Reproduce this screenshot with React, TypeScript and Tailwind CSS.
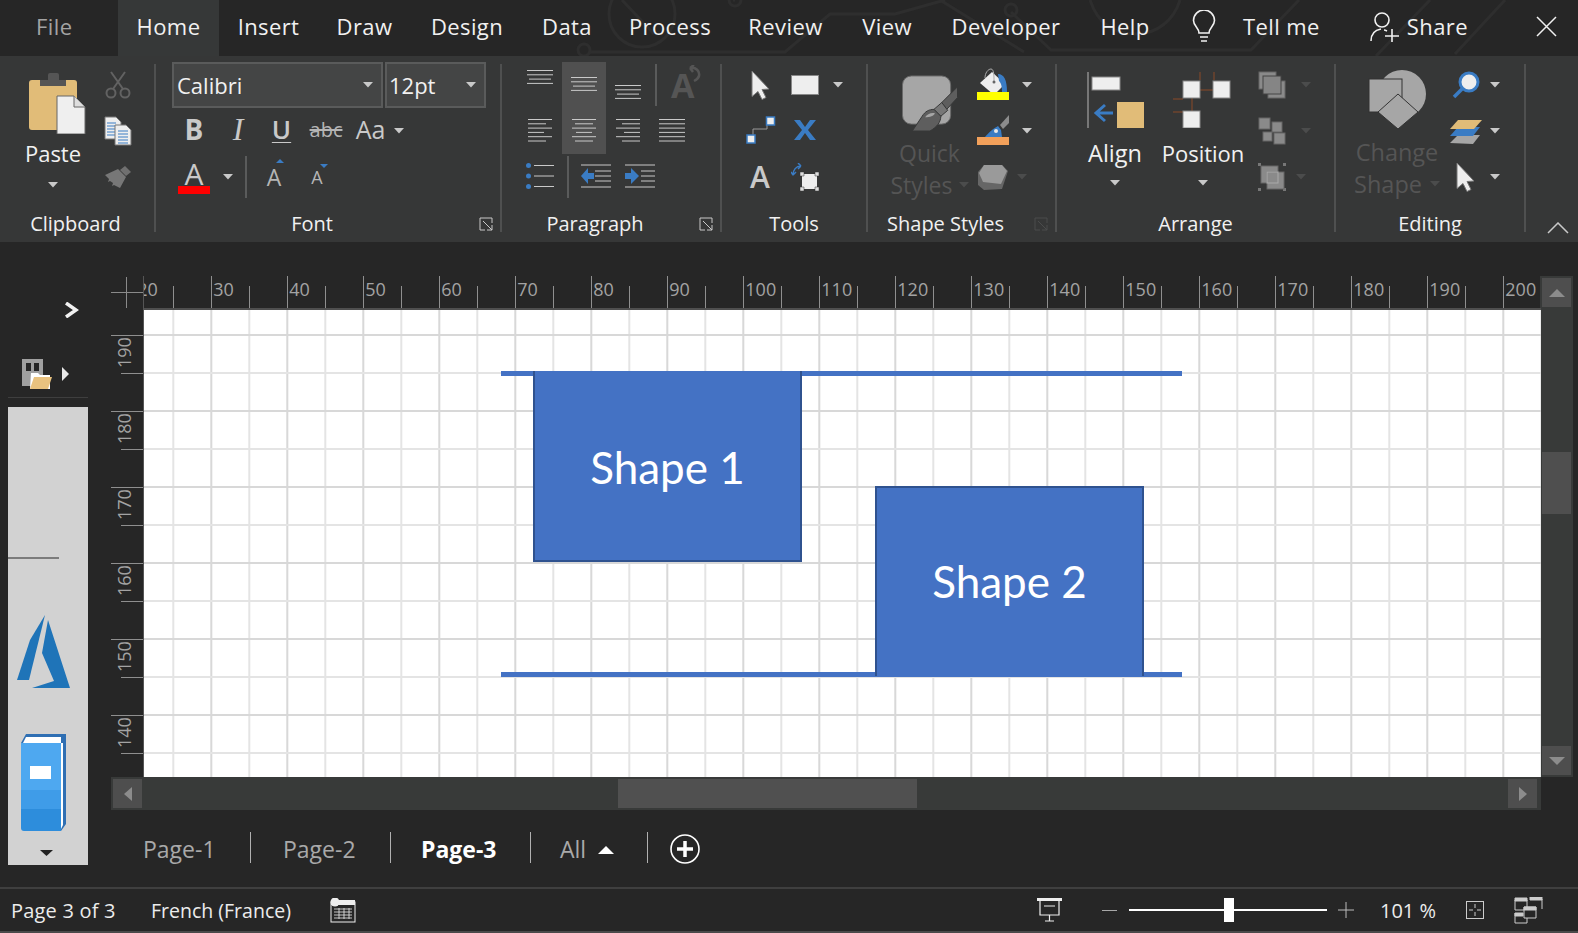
import { ReactNode } from 'react';

const GRID_X = Array.from({ length: 37 }, (_, i) => 29.3 + i * 38);
const GRID_Y = Array.from({ length: 13 }, (_, i) => 25 + i * 38);
const RULER_H = Array.from({ length: 19 }, (_, i) => ({ value: 20 + i * 10, x: i * 76 - 8.7 }));
const RULER_V = [190, 180, 170, 160, 150, 140].map((value, i) => ({ value, y: 25 + i * 76 }));

const Caret = ({ dim, className }: { dim?: boolean; className?: string }) => (
  <svg width="10" height="6" viewBox="0 0 10 6" className={className}>
    <path d="M0 0h10L5 5.5z" fill={dim ? '#4b4c4c' : '#c9c9c9'} />
  </svg>
);

const Launcher = ({ dim }: { dim?: boolean }) => (
  <svg width="14" height="14" viewBox="0 0 14 14" className="absolute right-[7px] top-[11px]">
    <path d="M13 6V1H1v12h5M4 4l9 9M8 13h5V8" fill="none" stroke={dim ? '#4b4c4c' : '#c9c9c9'} strokeWidth="1" />
  </svg>
);

const Sep = () => <div className="mt-[8px] h-[168px] w-[2px] shrink-0 bg-[#4f5050]" />;

const Group = ({
  className,
  labelClass,
  label,
  launcher,
  children,
}: {
  className: string;
  labelClass?: string;
  label: string;
  launcher?: 'on' | 'dim';
  children: ReactNode;
}) => (
  <div className={`flex h-full shrink-0 flex-col pt-[6px] ${className}`}>
    <div className="flex h-[138px]">{children}</div>
    <div className={`relative mt-[6px] flex h-[36px] items-center justify-center text-[20px] text-[#f1f1f1] ${labelClass ?? ''}`}>
      {label}
      {launcher && <Launcher dim={launcher === 'dim'} />}
    </div>
  </div>
);

const Row = ({ children }: { children: ReactNode }) => <div className="flex h-[46px] items-center">{children}</div>;

const Lines = ({ widths, x, top = 0, gap = 6 }: { widths: number[]; x: number[]; top?: number; gap?: number }) => (
  <svg width="30" height="26" viewBox="0 0 30 26">
    {widths.map((w, i) => (
      <path key={i} d={`M${x[i]} ${top + i * gap + 0.5}h${w}`} stroke="#c9c9c9" strokeWidth="1" />
    ))}
  </svg>
);

const Pointer = () => (
  <svg width="20" height="30" viewBox="0 0 20 30">
    <path d="M1 1l17 18-7 .5 4 8-4 2-4-8-6 5z" fill="#eee" stroke="#777" strokeWidth="1" />
  </svg>
);

const Squares = ({ kind }: { kind: 'front' | 'group' | 'select' }) => (
  <svg width="28" height="28" viewBox="0 0 28 28">
    {kind === 'front' && (
      <>
        <rect x="1" y="1" width="17" height="17" fill="#8a8a8a" stroke="#666" />
        <rect x="10" y="10" width="17" height="17" fill="#8a8a8a" stroke="#666" />
        <rect x="5" y="5" width="18" height="18" fill="#858585" stroke="#444" />
      </>
    )}
    {kind === 'group' && (
      <>
        <rect x="1" y="1" width="11" height="11" fill="#8a8a8a" stroke="#666" />
        <rect x="14" y="5" width="10" height="10" fill="#8a8a8a" stroke="#666" />
        <rect x="5" y="15" width="9" height="9" fill="#8a8a8a" stroke="#666" />
        <rect x="16" y="16" width="11" height="11" fill="#8a8a8a" stroke="#666" />
      </>
    )}
    {kind === 'select' && (
      <>
        <path d="M0 0h3v3H0zM25 0h3v3h-3zM0 25h3v3H0zM25 25h3v3h-3z" fill="#777" />
        <rect x="3" y="3" width="17" height="17" fill="#8a8a8a" stroke="#666" />
        <rect x="9" y="9" width="17" height="17" fill="#8a8a8a" stroke="#666" />
        <rect x="9" y="9" width="11" height="11" fill="#8a8a8a" stroke="#aaa" />
      </>
    )}
  </svg>
);

const TitleBar = () => (
  <div className="relative flex h-[56px] shrink-0 bg-[#262626] pb-[3px] text-[22px] tracking-[0.4px] text-[#f1f1f1]">
    <svg width="1578" height="56" viewBox="0 0 1578 56" fill="none" stroke="#2e2e2e" strokeWidth="3" className="absolute inset-0">
      <circle cx="642" cy="14" r="33" />
      <path d="M622 0l32 34M590 52h195l45-38h65l50-14M940 0l84 52M1011 12l40 38h200l48-50M1090 0c8 24 25 34 46 34s38-14 44-34M1430 0l-54 56M1505 0l-50 54M735 0l-2 0" />
      <circle cx="584" cy="50" r="6" />
      <circle cx="1011" cy="10" r="6" />
      <circle cx="735" cy="0" r="6" />
    </svg>
    <div className="relative flex w-[118px] items-center pl-[36px] text-[#a3a3a3]">File</div>
    <div className="relative -mb-[3px] flex w-[101px] items-center justify-center bg-[#363838] pb-[3px]">Home</div>
    <div className="relative flex w-[99px] items-center justify-center">Insert</div>
    <div className="relative flex w-[93px] items-center justify-center">Draw</div>
    <div className="relative flex w-[112px] items-center justify-center">Design</div>
    <div className="relative flex w-[88px] items-center justify-center">Data</div>
    <div className="relative flex w-[118px] items-center justify-center">Process</div>
    <div className="relative flex w-[113px] items-center justify-center">Review</div>
    <div className="relative flex w-[90px] items-center justify-center">View</div>
    <div className="relative flex w-[148px] items-center justify-center">Developer</div>
    <div className="relative flex w-[90px] items-center justify-center">Help</div>
    <div className="relative ml-[22px] flex items-center">
      <svg width="24" height="34" viewBox="0 0 24 34" fill="none" stroke="#f1f1f1" strokeWidth="1.6">
        <path d="M7 23c0-5-5.500-7-5.500-12.500a10.500 10.500 0 0 1 21 0C22.500 16 17 18 17 23zM8 27h8M9 31h6" />
      </svg>
    </div>
    <div className="relative ml-[27px] flex items-center">Tell me</div>
    <div className="relative ml-[50px] flex items-center">
      <svg width="30" height="32" viewBox="0 0 30 32" fill="none" stroke="#f1f1f1" strokeWidth="1.6">
        <circle cx="12" cy="9" r="7" />
        <path d="M1 30c0-7 4-11 10-12M14 19c1 0 2 .5 3 1M22 18v13M15 25h14" />
      </svg>
    </div>
    <div className="relative ml-[7px] flex items-center">Share</div>
    <div className="relative ml-[68px] flex items-center">
      <svg width="21" height="21" viewBox="0 0 21 21">
        <path d="M1 1l19 19M20 1L1 20" stroke="#f1f1f1" strokeWidth="1.5" />
      </svg>
    </div>
  </div>
);

const Clipboard = () => (
  <Group className="w-[154px]" labelClass="pr-[3px]" label="Clipboard">
    <div className="ml-[2px] flex w-[102px] flex-col items-center pt-[10px]">
      <svg width="58" height="62" viewBox="0 0 58 62" className="ml-[8px]">
        <rect x="1" y="8" width="48" height="50" rx="3" fill="#e1bc78" />
        <path d="M12 14V8h8V3q0-2 2-2h7q2 0 2 2v5h7v6z" fill="#555" />
        <path d="M29 24h17l11 11v27H29z" fill="#efefef" stroke="#666" />
        <path d="M46 24v11h11" fill="#ddd" stroke="#666" />
      </svg>
      <div className="mt-[4px] text-[22px] leading-[30px] text-[#f1f1f1]">Paste</div>
      <Caret className="mt-[14px]" />
    </div>
    <div className="flex w-[28px] flex-col items-center">
      <Row>
        <svg width="26" height="28" viewBox="0 0 26 28" fill="none" stroke="#626262" strokeWidth="2">
          <circle cx="6" cy="22" r="4.500" />
          <circle cx="20" cy="22" r="4.500" />
          <path d="M8 18L20 1M18 18L6 1" />
        </svg>
      </Row>
      <Row>
        <svg width="28" height="30" viewBox="0 0 28 30">
          <path d="M1 1h11l5 5v17H1z" fill="#eee" stroke="#777" />
          <path d="M3 7h9M3 10h11M3 13h11M3 16h11M3 19h11" stroke="#3a7cc4" />
          <path d="M11 9h11l5 5v15H11z" fill="#eee" stroke="#777" />
          <path d="M14 15h10M14 18h10M14 21h10M14 24h10M14 27h10" stroke="#3a7cc4" />
        </svg>
      </Row>
      <Row>
        <svg width="26" height="22" viewBox="0 0 26 22">
          <path d="M15 4l5-4 6 6-5 4z" fill="#707070" />
          <path d="M0 9l13-6 8 8-6 11-6-3-2 1 1-3-3-2-2 1 1-3z" fill="#777" />
        </svg>
      </Row>
    </div>
  </Group>
);

const FontGroup = () => (
  <Group className="w-[344px]" labelClass="pr-[32px]" label="Font" launcher="on">
    <div className="flex flex-col pl-[16px]">
      <div className="flex h-[46px] w-[314px] gap-[2px] text-[22px] text-[#f1f1f1]">
        <div className="flex w-[211px] items-center justify-between border-2 border-[#5a5b5b] bg-[#444545] pl-[3px] pr-[8px]">
          Calibri
          <Caret />
        </div>
        <div className="flex w-[101px] items-center justify-between border-2 border-[#5a5b5b] bg-[#444545] pl-[2px] pr-[8px]">
          12pt
          <Caret />
        </div>
      </div>
      <Row>
        <div className="flex w-[44px] justify-center pb-[4px] text-[28px] font-bold text-[#c9c9c9]">B</div>
        <div className="flex w-[44px] justify-center pb-[4px] font-['Liberation_Serif',serif] text-[32px] italic text-[#c9c9c9]">I</div>
        <div className="flex w-[43px] justify-center pb-[3px] text-[26px] font-semibold text-[#c9c9c9] underline decoration-1 underline-offset-[3px]">U</div>
        <div className="flex w-[46px] justify-center pb-[2px] text-[20px] text-[#b5b5b5] line-through">abc</div>
        <div className="flex w-[43px] justify-center pb-[2px] text-[25px] text-[#c9c9c9]">Aa</div>
        <Caret className="ml-[2px]" />
      </Row>
      <Row>
        <div className="flex w-[44px] flex-col items-center">
          <span className="h-[26px] text-[30px] leading-[28px] text-[#c9c9c9]">A</span>
          <span className="h-[8px] w-[32px] bg-[#ff0000]" />
        </div>
        <div className="flex w-[24px] justify-center">
          <Caret />
        </div>
        <div className="ml-[5px] h-[42px] w-[2px] bg-[#5a5b5b]" />
        <div className="relative flex w-[54px] justify-center text-[23px] text-[#b5b5b5]">
          A
          <span className="absolute left-[29px] top-[-1px] h-0 w-0 border-x-[4px] border-b-[4px] border-x-transparent border-b-[#3a7cc4]" />
        </div>
        <div className="relative flex w-[32px] justify-center text-[18px] text-[#b5b5b5]">
          A
          <span className="absolute left-[19px] top-[0px] h-0 w-0 border-x-[4px] border-t-[4px] border-x-transparent border-t-[#3a7cc4]" />
        </div>
      </Row>
    </div>
  </Group>
);

const ArrowLines = ({ flip }: { flip?: boolean }) => (
  <svg width="30" height="24" viewBox="0 0 30 24">
    <path d={flip ? 'M0 1h30M0 23h30M16 7h14M16 12h14M16 17h14' : 'M0 1h30M0 23h30M14 7h16M14 12h16M14 17h16'} stroke="#c9c9c9" strokeWidth="1" />
    <path d={flip ? 'M0 9h6V4l8 8-8 8v-5H0z' : 'M13 9H7V4l-7 8 7 8v-5h6z'} fill="#3a7cc4" />
  </svg>
);

const Paragraph = () => (
  <Group className="w-[218px]" labelClass="pr-[32px]" label="Paragraph" launcher="on">
    <div className="flex flex-col pl-[16px]">
      <Row>
        <div className="flex h-full w-[44px] items-start justify-center pt-[8px]">
          <Lines widths={[26, 26, 22, 26]} x={[2, 2, 4, 2]} gap={4.300} />
        </div>
        <div className="flex h-full w-[44px] items-start justify-center bg-[#505050] pt-[15px]">
          <Lines widths={[26, 26, 22, 26]} x={[2, 2, 4, 2]} gap={4.300} />
        </div>
        <div className="flex h-full w-[44px] items-start justify-center pt-[23px]">
          <Lines widths={[26, 26, 22, 26]} x={[2, 2, 4, 2]} gap={4.300} />
        </div>
        <div className="ml-[5px] h-[42px] w-[2px] bg-[#5a5b5b]" />
        <div className="relative ml-[14px] flex w-[30px] text-[34px] font-bold leading-[36px] text-[#555]">
          A
          <svg width="12" height="18" viewBox="0 0 12 18" className="absolute left-[18px] top-[-2px]" fill="none" stroke="#555" strokeWidth="2.500">
            <path d="M1 3c6-1 10 3 9 8-1 3-3 4-5 5M1 3l4-3M1 3l3 4" />
          </svg>
        </div>
      </Row>
      <Row>
        <div className="flex h-full w-[44px] items-center justify-center">
          <Lines widths={[24, 18, 24, 16, 24, 18]} x={[3, 3, 3, 3, 3, 3]} top={1} gap={4.300} />
        </div>
        <div className="flex h-full w-[44px] items-center justify-center bg-[#505050]">
          <Lines widths={[24, 18, 24, 16, 24, 18]} x={[3, 6, 3, 7, 3, 6]} top={1} gap={4.300} />
        </div>
        <div className="flex h-full w-[44px] items-center justify-center">
          <Lines widths={[24, 18, 24, 16, 24, 18]} x={[3, 9, 3, 11, 3, 9]} top={1} gap={4.300} />
        </div>
        <div className="flex h-full w-[44px] items-center justify-center">
          <Lines widths={[26, 26, 26, 26, 26, 26]} x={[2, 2, 2, 2, 2, 2]} top={1} gap={4.300} />
        </div>
      </Row>
      <Row>
        <div className="flex w-[44px] justify-center pb-[3px]">
          <svg width="28" height="26" viewBox="0 0 28 26">
            <circle cx="2.500" cy="2.500" r="2.500" fill="#3a7cc4" />
            <circle cx="2.500" cy="13" r="2.500" fill="#3a7cc4" />
            <circle cx="2.500" cy="23.500" r="2.500" fill="#3a7cc4" />
            <path d="M8 2.500h20M8 13h20M8 23.500h20" stroke="#c9c9c9" />
          </svg>
        </div>
        <div className="ml-[5px] h-[42px] w-[2px] bg-[#5a5b5b]" />
        <div className="ml-[5px] flex w-[44px] justify-center pb-[3px]">
          <ArrowLines />
        </div>
        <div className="flex w-[44px] justify-center pb-[3px]">
          <ArrowLines flip />
        </div>
      </Row>
    </div>
  </Group>
);

const Tools = () => (
  <Group className="w-[144px]" label="Tools">
    <div className="flex flex-col pl-[17px]">
      <Row>
        <div className="flex w-[44px] justify-center">
          <Pointer />
        </div>
        <div className="flex w-[44px] justify-center">
          <div className="h-[20px] w-[28px] border border-[#888] bg-[#eee]" />
        </div>
        <Caret className="ml-[6px]" />
      </Row>
      <Row>
        <div className="flex w-[44px] justify-center pb-[2px]">
          <svg width="30" height="28" viewBox="0 0 30 28">
            <path d="M7 20v-7h14V8" fill="none" stroke="#999" />
            <rect x="20.500" y="1" width="8" height="8" fill="#eee" stroke="#3a7cc4" strokeWidth="1.500" />
            <rect x="1" y="19" width="8" height="8" fill="#eee" stroke="#3a7cc4" strokeWidth="1.500" />
          </svg>
        </div>
        <div className="flex w-[44px] justify-center pb-[2px]">
          <svg width="22" height="20" viewBox="0 0 22 20">
            <path d="M0 0h6l5 7 5-7h6l-8 10 8 10h-6l-5-7-5 7H0l8-10z" fill="#3a7cc4" />
          </svg>
        </div>
      </Row>
      <Row>
        <div className="flex w-[42px] justify-center text-[30px] font-semibold leading-[32px] text-[#c9c9c9]">A</div>
        <div className="ml-[2px] flex w-[44px] justify-center">
          <svg width="28" height="28" viewBox="0 0 28 28">
            <path d="M2 12c0-5 3-9 8-9M10 3L7 0M10 3L7 6M2 12l-2-3M2 12l3-3" fill="none" stroke="#3a7cc4" strokeWidth="1.500" />
            <rect x="11" y="11" width="15" height="15" fill="#eee" />
            <path d="M9 9h4v4H9zM24 9h4v4h-4zM9 24h4v4H9zM24 24h4v4h-4z" fill="#ddd" stroke="#333" strokeWidth=".5" />
          </svg>
        </div>
      </Row>
    </div>
  </Group>
);

const ShapeStyles = () => (
  <Group className="w-[187px]" labelClass="pr-[32px]" label="Shape Styles" launcher="dim">
    <div className="flex w-[103px] flex-col items-center pl-[20px] pt-[13px]">
      <svg width="58" height="57" viewBox="0 0 58 57">
        <rect x="1" y="1" width="49" height="49" rx="9" fill="#a6a6a6" stroke="#6a6a6a" />
        <path d="M57 12v11L46 35l-5-7z" fill="#5e5e5e" stroke="#363737" />
        <path d="M33 35l8-7 6 8-7 6z" fill="#777" stroke="#363737" />
        <path d="M33 35c-5 0-9 2-12 7l-10 15h18c7-4 11-9 11-15z" fill="#5e5e5e" stroke="#363737" />
        <path d="M24 43c2-3 6-5 10-4-1 3-5 4-10 4z" fill="#a6a6a6" />
      </svg>
      <div className="mt-[7px] text-[23px] leading-[30px] text-[#555]">Quick</div>
      <div className="mt-[2px] flex items-center text-[23px] leading-[30px] text-[#555]">
        Styles
        <Caret dim className="ml-[6px]" />
      </div>
    </div>
    <div className="flex flex-col">
      <Row>
        <div className="flex w-[44px] justify-center pb-[2px]">
          <svg width="32" height="32" viewBox="0 0 32 32">
            <path d="M15 4l13 12-11 11L3 15z" fill="#eee" />
            <path d="M8 10c0-5 3-9 6-9s3 7 3 12" stroke="#aaa" fill="none" />
            <circle cx="17" cy="14" r="1.500" fill="#666" />
            <path d="M21 6c6 0 9 6 9 18h-5c0-6-1-9-3-11z" fill="#3a7cc4" />
            <rect x="0" y="24" width="32" height="8" fill="#ffff00" />
          </svg>
        </div>
        <Caret className="ml-[7px]" />
      </Row>
      <Row>
        <div className="flex w-[44px] justify-center pb-[2px]">
          <svg width="32" height="30" viewBox="0 0 32 30">
            <path d="M32 0L23 10l3 4 6-6z" fill="#8c8c8c" />
            <path d="M21 11c-4 2-10 7-13 11h17l-1-7z" fill="#3a7cc4" />
            <circle cx="19" cy="16" r="2" fill="#e8e8e8" />
            <rect x="0" y="22" width="32" height="8" fill="#f2a05a" />
          </svg>
        </div>
        <Caret className="ml-[7px]" />
      </Row>
      <Row>
        <div className="flex w-[44px] justify-center">
          <svg width="30" height="26" viewBox="0 0 30 26">
            <path d="M6 1h18l6 6-6 18-18 1-6-5V8z" fill="#666" />
            <path d="M6 1h18l5 6-6 13-18-2-4-9z" fill="#9a9a9a" />
          </svg>
        </div>
        <Caret dim className="ml-[2px]" />
      </Row>
    </div>
  </Group>
);

const Arrange = () => (
  <Group className="w-[277px]" label="Arrange">
    <div className="ml-[27px] flex w-[62px] flex-col items-center pt-[10px]">
      <svg width="58" height="56" viewBox="0 0 58 56">
        <path d="M2 0v56" stroke="#777" strokeWidth="2" />
        <rect x="6" y="5" width="28" height="13" fill="#eee" stroke="#888" />
        <rect x="31" y="30" width="27" height="26" fill="#e1bc78" />
        <path d="M27 41H12M19 33l-9 8 9 8" fill="none" stroke="#3a7cc4" strokeWidth="3" />
      </svg>
      <div className="mt-[10px] text-[23.5px] leading-[30px] text-[#f1f1f1]">Align</div>
      <Caret className="mt-[12px]" />
    </div>
    <div className="ml-[7px] flex w-[100px] flex-col items-center pt-[10px]">
      <svg width="60" height="56" viewBox="0 0 60 56">
        <path d="M27 0v8M41 0v8M0 27h10M27 18h16M0 40h14M19 26v14" stroke="#8a4b28" fill="none" />
        <rect x="10" y="9" width="17" height="17" fill="#eee" stroke="#888" />
        <rect x="40" y="9" width="17" height="17" fill="#eee" stroke="#888" />
        <rect x="10" y="39" width="17" height="17" fill="#eee" stroke="#888" />
      </svg>
      <div className="mt-[10px] text-[22px] leading-[30px] text-[#f1f1f1]">Position</div>
      <Caret className="mt-[12px]" />
    </div>
    <div className="flex flex-col">
      <Row>
        <div className="flex w-[38px] justify-center">
          <Squares kind="front" />
        </div>
        <Caret dim className="ml-[10px]" />
      </Row>
      <Row>
        <div className="flex w-[38px] justify-center">
          <Squares kind="group" />
        </div>
        <Caret dim className="ml-[10px]" />
      </Row>
      <Row>
        <div className="flex w-[38px] justify-center">
          <Squares kind="select" />
        </div>
        <Caret dim className="ml-[5px]" />
      </Row>
    </div>
  </Group>
);

const Editing = () => (
  <Group className="w-[188px]" label="Editing">
    <div className="flex w-[110px] flex-col items-center pl-[12px] pt-[8px]">
      <svg width="58" height="60" viewBox="0 0 58 60">
        <circle cx="34" cy="24" r="24" fill="#a6a6a6" />
        <rect x="1" y="9" width="33" height="33" fill="#a6a6a6" stroke="#333" />
        <path d="M30 24l20 18-20 17-20-17z" fill="#a6a6a6" stroke="#333" />
      </svg>
      <div className="mt-[7px] text-[23.5px] leading-[30px] text-[#555]">Change</div>
      <div className="mt-[2px] flex items-center text-[23.5px] leading-[30px] text-[#555]">
        Shape
        <Caret dim className="ml-[8px]" />
      </div>
    </div>
    <div className="flex flex-col">
      <Row>
        <div className="flex w-[40px] justify-center">
          <svg width="28" height="28" viewBox="0 0 28 28">
            <circle cx="17" cy="11" r="9" fill="#eee" stroke="#3a7cc4" strokeWidth="3" />
            <path d="M10 18l-8 8" stroke="#3a7cc4" strokeWidth="3.500" />
          </svg>
        </div>
        <Caret className="ml-[4px]" />
      </Row>
      <Row>
        <div className="flex w-[40px] justify-center">
          <svg width="32" height="25" viewBox="0 0 32 25">
            <path d="M0 24l8-8h22l-7 9z" fill="#a6a6a6" />
            <path d="M0 17l8-9h22l-7 9z" fill="#3a7cc4" />
            <path d="M0 10l8-9h24l-8 9z" fill="#e1bc78" />
          </svg>
        </div>
        <Caret className="ml-[4px]" />
      </Row>
      <Row>
        <div className="flex w-[40px] justify-center">
          <Pointer />
        </div>
        <Caret className="ml-[4px]" />
      </Row>
    </div>
  </Group>
);

const Ribbon = () => (
  <div className="flex h-[186px] shrink-0 bg-[#363737]">
    <Clipboard />
    <Sep />
    <FontGroup />
    <Sep />
    <Paragraph />
    <Sep />
    <Tools />
    <Sep />
    <ShapeStyles />
    <Sep />
    <Arrange />
    <Sep />
    <Editing />
    <Sep />
    <div className="relative flex-1">
      <svg width="22" height="12" viewBox="0 0 22 12" className="absolute left-[21px] top-[166px]">
        <path d="M1 11L11 1l10 10" fill="none" stroke="#c9c9c9" strokeWidth="1.500" />
      </svg>
    </div>
  </div>
);

const Sidebar = () => (
  <div className="flex w-[111px] shrink-0 flex-col">
    <svg width="14" height="16" viewBox="0 0 14 16" className="ml-[65px] mt-[60px]">
      <path d="M1 1l10 7-10 7" fill="none" stroke="#f1f1f1" strokeWidth="3.500" />
    </svg>
    <div className="ml-[22px] mt-[41px] flex items-center">
      <svg width="30" height="30" viewBox="0 0 30 30">
        <path d="M0 0h21v19H9v8H0zM4 4v8h5V4zM12 4v8h5V4z" fill="#a0a0a0" fillRule="evenodd" />
        <path d="M9 14h7l2 2h10v14H8z" fill="#fff" />
        <path d="M8 30l4-12h18l-4 12z" fill="#e9c27f" />
      </svg>
      <svg width="7" height="14" viewBox="0 0 7 14" className="ml-[10px]">
        <path d="M0 0l7 7-7 7z" fill="#e8e8e8" />
      </svg>
    </div>
    <div className="ml-[8px] mt-[8px] h-px w-[80px] bg-[#3e3e3e]" />
    <div className="ml-[8px] mt-[9px] flex h-[458px] w-[80px] flex-col bg-[#d2d2d2]">
      <div className="mt-[150px] h-[2px] w-[51px] bg-[#7c7c7c]" />
      <svg width="53" height="74" viewBox="0 0 53 74" className="ml-[9px] mt-[56px]">
        <path d="M28 0L13 25 0 65h12z" fill="#1f74b8" />
        <path d="M31 5l-6 33 12 28-22 7h38z" fill="#1f74b8" />
      </svg>
      <svg width="45" height="97" viewBox="0 0 45 97" className="ml-[13px] mt-[45px]">
        <path d="M5 0h40v90l-5 7V9H0z" fill="#2f6fb3" />
        <path d="M5 3h35v6H2z" fill="#fff" />
        <path d="M40 9h2v82l-2 4z" fill="#fff" />
        <rect x="0" y="9" width="40" height="47" fill="#4ea8f0" />
        <rect x="0" y="56" width="40" height="19" fill="#3f9ce8" />
        <path d="M0 75h40v22H3q-3 0-3-3z" fill="#2d8ddc" />
        <rect x="9" y="32" width="21" height="13" fill="#fff" />
      </svg>
      <svg width="13" height="6" viewBox="0 0 13 6" className="ml-[32px] mt-[19px]">
        <path d="M0 0h13L6.500 6z" fill="#222" />
      </svg>
    </div>
  </div>
);

const Canvas = () => (
  <div className="relative flex-1 overflow-hidden bg-white">
    <svg width="1397" height="467" viewBox="0 0 1397 467" className="absolute inset-0">
      {GRID_X.map((x, i) => (
        <path key={x} d={`M${x} 0v467`} stroke={i % 2 ? '#d8d8d8' : '#e4e4e4'} strokeWidth="2" />
      ))}
      {GRID_Y.map((y, i) => (
        <path key={y} d={`M0 ${y}h1397`} stroke={i % 2 ? '#e4e4e4' : '#d8d8d8'} strokeWidth="2" />
      ))}
    </svg>
    <div className="absolute left-[357px] top-[61px] h-[5px] w-[681px] bg-[#4472c4]" />
    <div className="absolute left-[357px] top-[362px] h-[5px] w-[681px] bg-[#4472c4]" />
    <div className="absolute left-[389px] top-[61px] flex h-[191px] w-[269px] items-center justify-center border-2 border-t-0 border-[#2f528f] bg-[#4472c4] pt-[3px] font-['Lato',sans-serif] text-[44px] text-white">
      Shape 1
    </div>
    <div className="absolute left-[731px] top-[176px] flex h-[190px] w-[269px] items-center justify-center border-2 border-b-0 border-[#2f528f] bg-[#4472c4] pb-[2px] font-['Lato',sans-serif] text-[44px] text-white">
      Shape 2
    </div>
  </div>
);

const ScrollBtn = ({ d }: { d: string }) => (
  <div className="flex h-[29px] w-[29px] shrink-0 items-center justify-center bg-[#4e4e4e]">
    <svg width="16" height="16" viewBox="0 0 16 16">
      <path d={d} fill="#8c8c8c" />
    </svg>
  </div>
);

const Center = () => (
  <div className="flex w-[1430px] shrink-0 flex-col">
    <div className="mt-[34px] flex h-[34px] shrink-0">
      <div className="relative h-full w-[33px] shrink-0 border-r border-[#555]">
        <div className="absolute left-[15px] top-[1px] h-[31px] w-px bg-[#8a8a8a]" />
        <div className="absolute left-0 top-[16px] h-px w-[32px] bg-[#8a8a8a]" />
      </div>
      <div className="relative h-full flex-1 overflow-hidden border-b-2 border-[#4f4f4f]">
        {RULER_H.map(t => (
          <div key={t.value}>
            <div className="absolute top-0 h-full w-px bg-[#8f8f8f]" style={{ left: t.x }} />
            <div className="absolute top-[10px] h-full w-px bg-[#8f8f8f]" style={{ left: t.x + 38 }} />
            <span className="absolute top-0 text-[18px] leading-[26px] text-[#a3a3a3]" style={{ left: t.x + 2 }}>
              {t.value}
            </span>
          </div>
        ))}
      </div>
    </div>
    <div className="flex h-[467px] shrink-0">
      <div className="relative w-[33px] shrink-0 border-r border-[#555]">
        {RULER_V.map(t => (
          <div key={t.value}>
            <div className="absolute left-0 h-px w-full bg-[#8f8f8f]" style={{ top: t.y }} />
            <div className="absolute left-[10px] h-px w-[22px] bg-[#8f8f8f]" style={{ top: t.y + 38 }} />
            <span
              className="absolute left-[2px] origin-top-left -rotate-90 text-[18px] leading-[22px] text-[#a3a3a3]"
              style={{ top: t.y + 33 }}
            >
              {t.value}
            </span>
          </div>
        ))}
      </div>
      <Canvas />
    </div>
    <div className="flex h-[33px] shrink-0 items-center bg-[#383a39] pl-[2px] pr-[4px]">
      <ScrollBtn d="M12 1v14L4 8z" />
      <div className="ml-[476px] h-[29px] w-[299px] bg-[#505050]" />
      <div className="flex-1" />
      <ScrollBtn d="M4 1v14l8-7z" />
    </div>
    <div className="flex flex-1 items-start pl-[32px] pt-[22px] text-[23px] text-[#a9a9a9]">
      <div className="flex h-[32px] w-[107px] items-center pt-[3px]">Page-1</div>
      <div className="h-[31px] w-px bg-[#b0b0b0]" />
      <div className="flex h-[32px] w-[139px] items-center pl-[32px] pt-[3px]">Page-2</div>
      <div className="h-[31px] w-px bg-[#b0b0b0]" />
      <div className="flex h-[32px] w-[139px] items-center pl-[30px] pt-[3px] font-bold text-white">Page-3</div>
      <div className="h-[31px] w-px bg-[#b0b0b0]" />
      <div className="flex h-[32px] w-[116px] items-center pl-[29px] pt-[3px]">
        All
        <svg width="16" height="8" viewBox="0 0 16 8" className="ml-[12px]">
          <path d="M0 8L8 0l8 8z" fill="#fff" />
        </svg>
      </div>
      <div className="h-[31px] w-px bg-[#b0b0b0]" />
      <svg width="30" height="30" viewBox="0 0 30 30" className="ml-[22px] mt-[2px]">
        <circle cx="15" cy="15" r="14" fill="none" stroke="#fff" strokeWidth="1.600" />
        <path d="M15 7v16M7 15h16" stroke="#fff" strokeWidth="3.500" />
      </svg>
    </div>
  </div>
);

const RightScroll = () => (
  <div className="-ml-[1px] flex-1 pt-[34px]">
    <div className="flex h-[501px] w-[33px] flex-col bg-[#383a39] p-[2px]">
      <ScrollBtn d="M0 12L8 4l8 8z" />
      <div className="relative flex-1">
        <div className="absolute left-0 top-[145px] h-[62px] w-full bg-[#4f4f4f]" />
      </div>
      <ScrollBtn d="M0 4l8 8 8-8z" />
    </div>
  </div>
);

const StatusBar = () => (
  <div className="flex h-[46px] shrink-0 items-center border-y-2 border-t-[#3f3f3f] border-b-[#4a4a4a] text-[20px] text-[#ececec]">
    <div className="w-[151px] pl-[11px] pt-[2px] tracking-[0.2px]">Page 3 of 3</div>
    <div className="w-[179px] pt-[2px] text-[19.5px]">French (France)</div>
    <svg width="26" height="25" viewBox="0 0 26 25">
      <rect x="1" y="4" width="24" height="20" fill="none" stroke="#eee" />
      <rect x="1" y="2" width="24" height="5" fill="#eee" />
      <circle cx="5" cy="4" r="4.500" fill="#eee" />
      <path d="M4 11h18M4 14h18M4 17h18M4 20h18M9 10v11M14 10v11M19 10v11" stroke="#eee" strokeWidth=".8" />
    </svg>
    <div className="flex-1" />
    <svg width="25" height="24" viewBox="0 0 25 24" fill="none" stroke="#eee">
      <path d="M0 1.500h25" strokeWidth="3" />
      <path d="M3 2v15h19V2M7 8h11M12.500 17v6M8 23h9" strokeWidth="1.200" />
    </svg>
    <div className="ml-[40px] h-px w-[15px] bg-[#a8a8a8]" />
    <div className="relative ml-[12px] h-[2px] w-[198px] bg-white">
      <div className="absolute left-[95px] top-[-11px] h-[24px] w-[10px] bg-white" />
    </div>
    <svg width="16" height="16" viewBox="0 0 16 16" className="ml-[11px]">
      <path d="M8 0v16M0 8h16" stroke="#bbb" />
    </svg>
    <div className="ml-[26px] w-[56px] whitespace-nowrap pt-[2px]">101 %</div>
    <svg width="18" height="18" viewBox="0 0 18 18" fill="none" stroke="#ccc" strokeWidth="1" className="ml-[30px]">
      <rect x=".5" y=".5" width="17" height="17" />
      <path d="M9 3v4M3 9h4M11 9h4M9 11v4" />
    </svg>
    <svg width="29" height="27" viewBox="0 0 29 27" fill="none" stroke="#ccc" className="ml-[30px] mr-[35px]">
      <path d="M1 3h12v10H1zM16 2h12v10" />
      <path d="M1 1h12v3H1zM16 0h12v3H16z" fill="#ccc" />
      <path d="M10 10h12v11H10z" fill="#262626" />
      <path d="M10 10h12v3H10zM1 16h8v3H1z" fill="#ccc" />
      <path d="M1 16v10h12v-5" />
    </svg>
  </div>
);

export default function App() {
  return (
    <div className="flex h-[933px] w-[1578px] flex-col overflow-hidden bg-[#262626] font-['Open_Sans','Noto_Sans',sans-serif] text-[#f1f1f1]">
      <TitleBar />
      <Ribbon />
      <div className="flex flex-1">
        <Sidebar />
        <Center />
        <RightScroll />
      </div>
      <StatusBar />
    </div>
  );
}
